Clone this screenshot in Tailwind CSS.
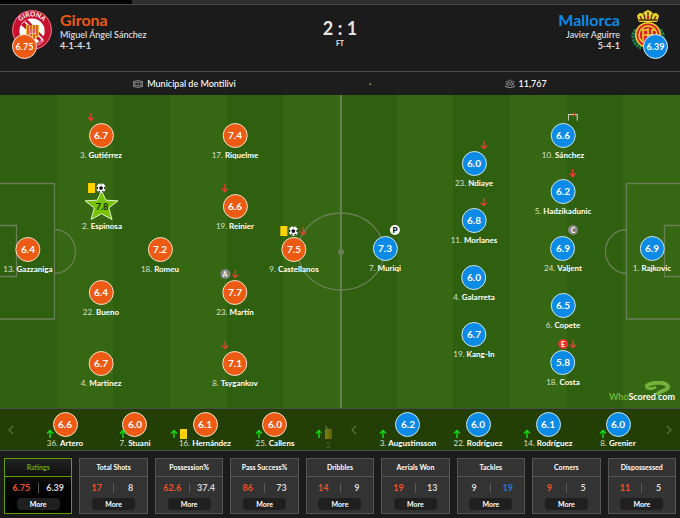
<!DOCTYPE html>
<html lang="en">
<head>
    <meta charset="UTF-8">
    <meta name="viewport" content="width=device-width, initial-scale=1.0">
    <title>Girona 2:1 Mallorca</title>
    <!-- Tailwind CSS CDN -->
    <script src="https://cdn.jsdelivr.net/npm/@tailwindcss/browser@4"></script>
</head>
<body class="min-h-screen bg-[#1b1b1b] font-['Lato',sans-serif] text-white">

<!-- Tab strip -->
<div class="flex h-[5px] border-b border-[#4a4a4a] bg-[#2f2f2f]">
    <div class="h-full w-[132px] bg-black"></div>
</div>

<!-- Match header -->
<header class="grid h-[67px] grid-cols-3 border-b border-[#4c4c4c] px-3 pt-[5px]">
    <div class="flex gap-2">
        <div class="relative h-10 w-10">
            <svg class="h-10 w-10" viewBox="0 0 40 40">
                <circle cx="20" cy="20" r="20" fill="#c8102e"/>
                <circle cx="20" cy="20" r="19.300" fill="none" stroke="#e8c4ca" stroke-width="0.6"/>
                <circle cx="20" cy="21" r="12.600" fill="#fff"/>
                <path d="M9 15l6-6 17 18-4 5z" fill="#c8102e"/>
                <path d="M13 12l18 18M17 9l15 15M9 19l14 14M23 9l9 9" stroke="#fff" stroke-width="1.600"/>
                <path d="M14 15h13v8c0 5-4 6-6.500 8-2.500-2-6.500-3-6.500-8z" fill="#f3c332"/>
                <path d="M16 15v11M19 15v14M22 15v14M25 15v11" stroke="#d0202e" stroke-width="1.200"/>
                <path d="M17 19h7v5h-7z" fill="#f7e6c8"/>
                <path d="M17 20h7M17 22h7M19 19v5M22 19v5" stroke="#c8102e" stroke-width="0.7"/>
                <path id="crestTop" d="M6.500 15.500a14.500 14.500 0 0 1 27 0" fill="none"/>
                <path id="crestFoot" d="M20 36.500a16.500 16.500 0 0 0 15-10" fill="none"/>
                <text fill="#fff" font-size="6.500" font-weight="700" text-anchor="middle"><textPath href="#crestTop" startOffset="50%">GIRONA</textPath></text>
                <text fill="#fff" font-size="4"><textPath href="#crestFoot" startOffset="20%">CLUB</textPath></text>
            </svg>
            <span class="absolute top-6 left-0 flex h-[25px] w-[25px] items-center justify-center rounded-full border border-[#f0e4dc] bg-[#ec5a13] text-[9px] font-bold">6.75</span>
        </div>
        <div>
            <a href="#girona" class="block text-[16px] leading-5 font-bold text-[#ec5a13]">Girona</a>
            <p class="text-[9px] leading-[10px] font-medium whitespace-nowrap text-[#e4e4e4]">Miguel Ángel Sánchez</p>
            <p class="text-[9px] leading-3 font-bold text-[#dcdcdc]">4-1-4-1</p>
        </div>
    </div>
    <div class="pt-[7px] text-center font-bold text-[#e4e4e4]">
        <p class="text-[18px] leading-[22px]">2 : 1</p>
        <p class="text-[7px] leading-2">FT</p>
    </div>
    <div class="flex justify-end gap-2">
        <div class="text-right">
            <a href="#mallorca" class="block text-[16px] leading-5 font-bold text-[#0b8ae6]">Mallorca</a>
            <p class="text-[9px] leading-[10px] font-medium whitespace-nowrap text-[#e4e4e4]">Javier Aguirre</p>
            <p class="text-[9px] leading-3 font-bold text-[#dcdcdc]">5-4-1</p>
        </div>
        <div class="relative h-10 w-10">
            <svg class="h-10 w-10" viewBox="0 0 40 40">
                <path d="M8 20c-5 3-4 15 6 18M32 20c5 3 4 15-6 18" fill="none" stroke="#1d7a4c" stroke-width="3.500" stroke-dasharray="2.500 0.8"/>
                <path d="M11 12L9 6c1-3 4-4 6-2 1-3 3-3 5-4 2 1 4 1 5 4 2-2 5-1 6 2l-2 6z" fill="#e8d32a"/>
                <path d="M11 10h18M12 6l2 4M28 6l-2 4M20 2v8M16 4l1 6M24 4l-1 6" stroke="#5a2a1a" stroke-width="1.300"/>
                <circle cx="20" cy="7" r="1.300" fill="#d3202c"/>
                <circle cx="20" cy="25" r="13" fill="#f0d62c"/>
                <circle cx="20" cy="25" r="11.500" fill="#d8232f"/>
                <circle cx="20" cy="25" r="9" fill="none" stroke="#f0d62c" stroke-width="1.400"/>
                <path d="M15 19v12M15 20h5M20 18v15M20 25h-5M24 19v12M20 25h4M24 20h3" stroke="#f0d62c" stroke-width="1.500" fill="none"/>
            </svg>
            <span class="absolute top-6 right-0 flex h-[25px] w-[25px] items-center justify-center rounded-full border border-[#dcebf5] bg-[#0b8ae6] text-[9px] font-bold">6.39</span>
        </div>
    </div>
</header>

<!-- Venue and attendance -->
<div class="flex h-[23px] items-center justify-evenly bg-[#1d1d1d] text-[9px] font-medium">
    <p class="flex items-center gap-1">
        <svg class="h-2.5 w-2.5" viewBox="0 0 20 20" fill="none" stroke="#9a9a9a" stroke-width="1.500">
            <path d="M1 5q9-4 18 0v10q-9 4-18 0zM4 7q6-2 12 0v6q-6 2-12 0zM1 5l3 2M19 5l-3 2M1 15l3-2M19 15l-3-2M10 7v6"/>
        </svg>
        Municipal de Montilivi
    </p>
    <span class="text-[#bbb]">·</span>
    <p class="flex items-center gap-1">
        <svg class="h-2.5 w-2.5" viewBox="0 0 20 20" fill="none" stroke="#9a9a9a" stroke-width="1.500">
            <circle cx="10" cy="5" r="3"/><circle cx="4.500" cy="7" r="2.300"/><circle cx="15.500" cy="7" r="2.300"/>
            <path d="M6 17v-4q4-5 8 0v4zM6 16H1v-3q2-3 5-2M14 16h5v-3q-2-3-5-2"/>
        </svg>
        11,767
    </p>
</div>

<!-- Pitch -->
<main class="relative aspect-[680/313] w-full overflow-hidden">
    <div class="grid h-full grid-cols-12">
        <div class="bg-[#2f600f]"></div><div class="bg-[#366712]"></div>
        <div class="bg-[#2f600f]"></div><div class="bg-[#366712]"></div>
        <div class="bg-[#2f600f]"></div><div class="bg-[#366712]"></div>
        <div class="bg-[#2f600f]"></div><div class="bg-[#366712]"></div>
        <div class="bg-[#2f600f]"></div><div class="bg-[#366712]"></div>
        <div class="bg-[#2f600f]"></div><div class="bg-[#366712]"></div>
    </div>
    <svg class="absolute inset-0 h-full w-full" viewBox="0 0 680 313" fill="none" stroke="#6a7f58" stroke-width="1.300">
        <path d="M0 88.500H54.500V224H0M0 130.500H16.500V181.500H0M54.500 134.500a21 22 0 0 1 0 44"/>
        <path d="M680 88.500H626.500V224H680M680 130.500H664.500V181.500H680M626.500 134.500a21 22 0 0 0 0 44"/>
        <path d="M341 0V313" stroke-width="2"/>
        <ellipse cx="341" cy="156.500" rx="43" ry="38.500"/>
        <circle cx="341" cy="157" r="3" fill="#6a7f58" stroke="none"/>
    </svg>
    <div id="pitch"></div>

    <!-- Watermark -->
    <div class="absolute right-[5px] bottom-[5px] text-[9px] leading-3 font-bold">
        <svg class="absolute -top-2.5 right-1 h-[18px] w-7" viewBox="0 0 28 18" fill="none" stroke="#74b23a" stroke-width="4">
            <path d="M3 6C6 1 25 0 25 6c0 4-9 3-11 8"/>
            <path d="M3 6c2 2 6 2 10 0" stroke-width="3"/>
        </svg>
        <div class="relative"><span class="text-[#74b23a]">Who</span><span>Scored</span><span class="text-[#74b23a]">.</span><span>com</span></div>
    </div>
</main>

<!-- Substitutes -->
<section class="grid h-[43px] grid-cols-2 border-y border-[#4a4f45] bg-[#233f05]">
    <div class="relative overflow-hidden">
        <div id="homeBench" class="ml-[30px] flex"></div>
        <div class="absolute inset-y-0 right-0 w-5 bg-linear-to-r from-[#233f05]/40 to-[#233f05]"></div>
        <button aria-label="Previous home substitutes" class="absolute top-4 left-2">
            <svg class="h-2.5 w-1.5" viewBox="0 0 6 10" fill="none" stroke="#5c7243" stroke-width="1.200"><path d="M5 1L1 5l4 4"/></svg>
        </button>
        <button aria-label="Next home substitutes" class="absolute top-4 right-2.5">
            <svg class="h-2.5 w-1.5" viewBox="0 0 6 10" fill="none" stroke="#5c7243" stroke-width="1.200"><path d="M1 1l4 4-4 4"/></svg>
        </button>
    </div>
    <div class="relative overflow-hidden">
        <div id="awayBench" class="ml-[33px] flex"></div>
        <button aria-label="Previous away substitutes" class="absolute top-4 left-[11px]">
            <svg class="h-2.5 w-1.5" viewBox="0 0 6 10" fill="none" stroke="#5c7243" stroke-width="1.200"><path d="M5 1L1 5l4 4"/></svg>
        </button>
        <button aria-label="Next away substitutes" class="absolute top-4 right-2">
            <svg class="h-2.5 w-1.5" viewBox="0 0 6 10" fill="none" stroke="#5c7243" stroke-width="1.200"><path d="M1 1l4 4-4 4"/></svg>
        </button>
    </div>
</section>

<!-- Team stats -->
<section id="stats" class="grid grid-cols-9 gap-[7px] px-1 pt-[7px]"></section>

<script>
    const arrow = (dir, color) => `<svg class="h-2.5 w-2.5" viewBox="0 0 10 10" fill="none" stroke="${color}" stroke-width="1.400"><path d="${dir === 'down' ? 'M5 1v7.500M2 5.500l3 3 3-3' : 'M5 9V1.500M2 4.500l3-3 3 3'}"/></svg>`;

    const icons = {
        off: arrow('down', '#e83c2e'),
        on: arrow('up', '#14e014'),
        card: '<span class="mx-[1px] h-2.5 w-[7px] shrink-0 bg-[#ffd200]"></span>',
        ball: `<svg class="h-2.5 w-2.5" viewBox="0 0 20 20"><circle cx="10" cy="10" r="9.500" fill="#fff"/><path d="M10 6l4 3-1.500 4.500h-5L6 9zM7 1.200L10 3l3-1.800zM1 7l3 1-.5 4L1 13zM19 7l-3 1 .5 4 2.500 1zM4 17l2.500-2 2.500 3.500zM16 17l-2.500-2-2.500 3.500z" fill="#111"/></svg>`,
        penalty: '<span class="flex h-2.5 w-2.5 items-center justify-center rounded-full bg-white text-[8px] leading-none font-black text-black">P</span>',
        assist: '<span class="flex h-2.5 w-2.5 items-center justify-center rounded-full bg-[#858585] text-[7px] leading-none font-bold text-white">A</span>',
        captain: '<span class="flex h-2.5 w-2.5 items-center justify-center rounded-full bg-[#858585] text-[7px] leading-none font-bold text-white">C</span>',
        error: '<span class="flex h-2.5 w-2.5 items-center justify-center rounded-full bg-[#f02f35] text-[7px] leading-none font-bold text-white">E</span>',
        miss: `<svg class="h-2.5 w-2.5" viewBox="0 0 10 10" fill="none" stroke="#d8d8d8" stroke-width="1.200"><path d="M.5 8.500v-6h9v6"/><path d="M5 1l3 3M8 1L5 4" stroke="#e83c2e"/></svg>`
    };

    // Positions are the centre of the rating badge, on a 680 x 313 pitch
    const home = [
        { no: 13, name: 'Gazzaniga', rating: '6.4', x: 28, y: 155 },
        { no: 3, name: 'Gutiérrez', rating: '6.7', x: 101, y: 41, events: ['off'] },
        { no: 2, name: 'Espinosa', rating: '7.8', x: 102, y: 112, events: ['card', 'ball'], best: true },
        { no: 22, name: 'Bueno', rating: '6.4', x: 101, y: 198 },
        { no: 4, name: 'Martinez', rating: '6.7', x: 101, y: 269 },
        { no: 18, name: 'Romeu', rating: '7.2', x: 160, y: 155 },
        { no: 17, name: 'Riquelme', rating: '7.4', x: 235, y: 41 },
        { no: 19, name: 'Reinier', rating: '6.6', x: 235, y: 112, events: ['off'] },
        { no: 23, name: 'Martín', rating: '7.7', x: 235, y: 198, events: ['assist', 'off'] },
        { no: 8, name: 'Tsygankov', rating: '7.1', x: 235, y: 269, events: ['off'] },
        { no: 9, name: 'Castellanos', rating: '7.5', x: 294, y: 155, events: ['card', 'ball', 'off'] }
    ];
    const away = [
        { no: 1, name: 'Rajkovic', rating: '6.9', x: 652, y: 154 },
        { no: 10, name: 'Sánchez', rating: '6.6', x: 563, y: 41, events: ['miss'] },
        { no: 5, name: 'Hadzikadunic', rating: '6.2', x: 563, y: 97, events: ['off'] },
        { no: 24, name: 'Valjent', rating: '6.9', x: 563, y: 154, events: ['captain'] },
        { no: 6, name: 'Copete', rating: '6.5', x: 563, y: 211 },
        { no: 18, name: 'Costa', rating: '5.8', x: 563, y: 268, events: ['error', 'off'] },
        { no: 23, name: 'Ndiaye', rating: '6.0', x: 474, y: 69, events: ['off'] },
        { no: 11, name: 'Morlanes', rating: '6.8', x: 474, y: 126, events: ['off'] },
        { no: 4, name: 'Galarreta', rating: '6.0', x: 474, y: 183 },
        { no: 19, name: 'Kang-In', rating: '6.7', x: 474, y: 240 },
        { no: 7, name: 'Muriqi', rating: '7.3', x: 385, y: 154, events: ['penalty'] }
    ];
    const homeBench = [
        { no: 36, name: 'Artero', rating: '6.6', events: ['on'] },
        { no: 7, name: 'Stuani', rating: '6.0', events: ['on'] },
        { no: 16, name: 'Hernández', rating: '6.1', events: ['on', 'card'] },
        { no: 25, name: 'Callens', rating: '6.0', events: ['on'] }
    ];
    const awayBench = [
        { no: 3, name: 'Augustinsson', rating: '6.2', events: ['on'] },
        { no: 22, name: 'Rodríguez', rating: '6.0', events: ['on'] },
        { no: 14, name: 'Rodríguez', rating: '6.1', events: ['on'] },
        { no: 8, name: 'Grenier', rating: '6.0', events: ['on'] }
    ];
    const stats = [
        { title: 'Ratings', home: '6.75', away: '6.39', lead: 'home', active: true },
        { title: 'Total Shots', home: '17', away: '8', lead: 'home' },
        { title: 'Possession%', home: '62.6', away: '37.4', lead: 'home' },
        { title: 'Pass Success%', home: '86', away: '73', lead: 'home' },
        { title: 'Dribbles', home: '14', away: '9', lead: 'home' },
        { title: 'Aerials Won', home: '19', away: '13', lead: 'home' },
        { title: 'Tackles', home: '9', away: '19', lead: 'away' },
        { title: 'Corners', home: '9', away: '5', lead: 'home' },
        { title: 'Dispossessed', home: '11', away: '5', lead: 'home' }
    ];

    const eventIcons = player => (player.events || []).map(e => icons[e]).join('');
    const label = player => `<p class="text-[8px] leading-[13px] whitespace-nowrap text-[#d5e0cc]">${player.no}. <span class="font-bold text-white">${player.name}</span></p>`;

    function badge(player, side) {
        if (player.best) {
            return `<div class="relative flex h-[25px] w-[25px] items-center justify-center">
                <svg class="absolute -top-1 -left-[5px] h-[31px] w-[35px]" viewBox="0 0 36 32"><path d="M18 1l4.500 9.500 12.500.7-9.500 7.300 3.300 12L18 24.500 7.200 30.500l3.300-12L1 11.200l12.500-.7z" fill="#76c400" stroke="#e6f2d8"/></svg>
                <span class="relative text-[9px] font-bold text-[#14280a]">${player.rating}</span>
            </div>`;
        }
        const color = side === 'home' ? 'border-[#f0e4c8] bg-[#ec5a13]' : 'border-[#cfe6e8] bg-[#0b8ae6]';
        return `<div class="flex h-[25px] w-[25px] items-center justify-center rounded-full border text-[10px] font-bold ${color}">${player.rating}</div>`;
    }

    // Starting elevens
    function pitchPlayer(player, side) {
        const align = side === 'home' ? 'justify-start' : 'justify-end';
        return `<div class="absolute -mt-6 flex -translate-x-1/2 flex-col items-center gap-px" style="left: ${player.x / 6.8}%; top: ${player.y / 3.13}%">
            <div class="relative z-10 flex h-2.5 w-[30px] ${align}">${eventIcons(player)}</div>
            ${badge(player, side)}
            ${label(player)}
        </div>`;
    }
    document.getElementById('pitch').innerHTML =
        home.map(p => pitchPlayer(p, 'home')).join('') + away.map(p => pitchPlayer(p, 'away')).join('');

    // Benches
    function benchPlayer(player, side) {
        const offset = player.events.length > 1 ? '-left-2.5' : '-left-0.5';
        return `<div class="flex w-[70px] shrink-0 justify-center pt-[3px]">
            <div class="relative flex flex-col items-center">
                ${badge(player, side)}
                ${label(player)}
                <div class="absolute top-[17px] flex ${offset}">${eventIcons(player)}</div>
            </div>
        </div>`;
    }
    document.getElementById('homeBench').innerHTML = homeBench.map(p => benchPlayer(p, 'home')).join('') +
        `<div class="shrink-0 pt-5 pl-1"><div class="flex">${icons.on}${icons.card}</div><p class="pl-3 text-[8px] leading-[13px] text-[#d5e0cc]/60">2</p></div>`;
    document.getElementById('awayBench').innerHTML = awayBench.map(p => benchPlayer(p, 'away')).join('');

    // Stat cards
    document.getElementById('stats').innerHTML = stats.map(stat => `
        <article class="border pb-[3px] text-center font-bold ${stat.active ? 'border-[#5f9e00] bg-linear-to-b from-[#222] to-black' : 'border-[#555] bg-[#333]'}">
            <h2 class="border-b text-[7px] leading-[17px] whitespace-nowrap ${stat.active ? 'border-[#5f9e00] text-[#5fae0a]' : 'border-[#555] text-white'}">${stat.title}</h2>
            <div class="flex h-[21px] items-center text-[9px]">
                <span class="flex-1 ${stat.lead === 'home' ? 'text-[#ec5228]' : 'text-[#d8d8d8]'}">${stat.home}</span>
                <span class="h-2.5 w-px bg-[#5a5a5a]"></span>
                <span class="flex-1 ${stat.lead === 'away' ? 'text-[#1a7ddb]' : 'text-[#d8d8d8]'}">${stat.away}</span>
            </div>
            <button class="mx-auto block h-3 w-[43px] rounded bg-[#1f1f1f] text-[7px] leading-3">More</button>
        </article>`).join('');
</script>

</body>
</html>
